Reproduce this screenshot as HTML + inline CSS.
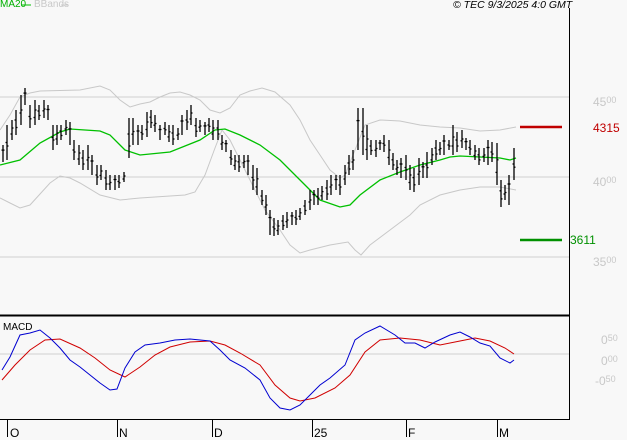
<!DOCTYPE html>
<html><head><meta charset="utf-8"><style>
html,body{margin:0;padding:0;background:#f8f8f8;}
body{width:627px;height:440px;overflow:hidden;position:relative;font-family:"Liberation Sans",sans-serif;}
.t{position:absolute;font-size:12px;white-space:nowrap;line-height:1;}
.g{color:#c8c8c8;}
small{font-size:9px;vertical-align:3px;}
</style></head><body>
<svg width="627" height="440" style="position:absolute;left:0;top:0" id="s">
<line x1="0" y1="97" x2="569" y2="97" stroke="#cfcfcf"/>
<line x1="0" y1="177" x2="569" y2="177" stroke="#cfcfcf"/>
<line x1="0" y1="257" x2="569" y2="257" stroke="#cfcfcf"/>
<line x1="0" y1="354" x2="569" y2="354" stroke="#cfcfcf"/>
<line x1="569.5" y1="8" x2="569.5" y2="420" stroke="#000"/>
<line x1="0" y1="315.5" x2="569" y2="315.5" stroke="#000" stroke-width="2"/>
<line x1="0" y1="419.5" x2="570" y2="419.5" stroke="#000"/>
<g stroke="#000"><line x1="7.5" y1="420" x2="7.5" y2="437"/><line x1="117.5" y1="420" x2="117.5" y2="437"/><line x1="212.5" y1="420" x2="212.5" y2="437"/><line x1="312.5" y1="420" x2="312.5" y2="437"/><line x1="406.5" y1="420" x2="406.5" y2="437"/><line x1="497.5" y1="420" x2="497.5" y2="437"/></g>
<line x1="520" y1="127" x2="562" y2="127" stroke="#c00000" stroke-width="2.5"/>
<line x1="520" y1="240" x2="562" y2="240" stroke="#009000" stroke-width="2.5"/>
<line x1="21" y1="5" x2="31" y2="5" stroke="#00c000"/>
<line x1="61" y1="5" x2="68" y2="5" stroke="#c8c8c8"/>
<polyline fill="none" stroke="#c8c8c8" points="0,130 10,115 20,97 30,93 40,91 80,90 100,86 110,90 120,100 130,107 140,104 150,102 160,97 170,93 180,92 190,95 200,100 210,110 220,113 230,108 240,95 250,91 262,88 275,92 290,105 300,120 310,140 320,155 330,170 340,178 345,175 355,150 365,125 380,120 400,121 420,125 440,127 460,128 480,131 500,130 516,127"/>
<polyline fill="none" stroke="#c8c8c8" points="0,198 10,203 20,208 30,205 50,183 60,176 70,178 80,183 100,195 120,200 140,198 170,196 185,195 195,192 205,175 215,148 222,130 230,140 240,160 250,180 265,210 280,230 290,245 300,253 310,250 330,245 348,242 355,250 361,255 370,245 390,230 410,215 420,205 440,195 460,190 480,187 500,187 516,190"/>
<polyline fill="none" stroke="#00c000" stroke-width="1.3" points="0,165 20,160 40,143 60,132 70,129 100,131 110,135 125,150 140,155 170,152 200,140 215,130 225,129 240,135 260,145 280,160 300,180 320,200 340,207 350,205 360,195 380,180 400,172 420,165 440,160 450,157 460,156 480,157 500,158 510,160 516,158"/>
<g id="bars" stroke="#000" stroke-width="1.3"></g>
<polyline fill="none" stroke="#d00000" points="2,380 15,365 30,350 45,340 60,339 80,348 95,358 110,370 125,377 140,367 155,355 170,347 190,342 210,341 225,345 240,353 260,365 275,385 290,398 300,401 315,398 335,388 350,375 365,352 380,340 400,338 420,340 440,345 460,341 475,338 490,341 505,348 514,354"/>
<polyline fill="none" stroke="#0000d0" points="2,370 10,357 20,335 30,333 40,330 50,338 60,348 70,360 80,367 90,375 100,383 110,390 117,389 125,368 135,352 145,345 160,343 175,340 190,339 210,341 220,350 230,360 245,368 260,380 270,398 280,408 290,410 300,405 310,395 320,385 330,378 345,365 355,340 365,333 380,326 395,335 405,343 415,343 425,348 435,342 450,335 460,332 470,337 480,343 490,346 500,358 510,363 514,360"/>
</svg>
<div class="t" style="left:0;top:0;color:#00b000;font-size:10px">MA20</div>
<div class="t" style="left:34px;top:0;color:#c8c8c8;font-size:10px">BBands</div>
<div class="t" style="left:453px;top:0;font-style:italic;font-size:10.5px">© TEC 9/3/2025 4:0 GMT</div>
<div class="t g" style="left:593px;top:96px">45<small>00</small></div>
<div class="t" style="left:593px;top:122px;color:#c00000">4315</div>
<div class="t g" style="left:593px;top:176px">40<small>00</small></div>
<div class="t" style="left:570px;top:234px;color:#009000">3611</div>
<div class="t g" style="left:593px;top:256px">35<small>00</small></div>
<div class="t g" style="left:601px;top:334px">0<small>50</small></div>
<div class="t g" style="left:601px;top:355px">0<small>00</small></div>
<div class="t g" style="left:595px;top:375px">-0<small>50</small></div>
<div class="t" style="left:3px;top:323px;font-size:10px">MACD</div>
<div class="t" style="left:10px;top:427px">O</div>
<div class="t" style="left:119px;top:427px">N</div>
<div class="t" style="left:214px;top:427px">D</div>
<div class="t" style="left:314px;top:427px">25</div>
<div class="t" style="left:408px;top:427px">F</div>
<div class="t" style="left:499px;top:427px">M</div>
<script>
var b=[[3,145,162],[7,125,160],[12,120,140],[16,110,135],[21,95,125],[25,88,105],[30,105,128],[35,100,125],[39,105,120],[44,100,118],[48,105,120],[53,125,150],[57,125,145],[61,125,140],[66,120,135],[70,122,145],[74,140,160],[79,145,165],[83,150,170],[88,145,170],[92,155,175],[97,165,185],[101,165,180],[106,170,190],[110,175,190],[115,175,190],[119,175,188],[124,172,182],[129,118,158],[133,118,145],[138,125,145],[142,125,140],[147,112,137],[151,110,128],[155,115,132],[160,125,140],[165,122,135],[169,125,142],[173,125,145],[178,128,140],[182,115,135],[187,110,130],[191,105,125],[196,118,137],[200,120,132],[205,122,135],[209,118,132],[213,120,140],[218,120,140],[222,135,150],[226,140,152],[231,150,165],[235,155,170],[239,155,172],[244,155,168],[248,155,175],[253,165,190],[257,168,195],[262,190,205],[266,195,215],[270,210,235],[274,218,236],[278,220,235],[283,215,230],[287,212,228],[292,212,225],[296,210,225],[300,208,220],[305,200,215],[310,190,210],[314,190,205],[318,188,205],[322,186,200],[327,180,200],[331,175,195],[336,175,190],[340,175,195],[345,165,185],[349,155,175],[353,150,170],[358,108,150],[363,108,155],[367,125,160],[371,140,155],[376,140,157],[380,140,150],[384,135,152],[389,140,165],[393,153,170],[397,160,175],[401,158,178],[406,155,180],[410,165,190],[414,168,192],[419,158,185],[423,162,178],[427,152,178],[432,148,165],[436,140,160],[440,142,155],[444,135,155],[449,140,150],[453,125,155],[457,132,152],[462,130,148],[466,138,150],[470,140,155],[475,145,160],[479,148,165],[484,148,162],[488,140,165],[492,142,162],[497,143,185],[501,180,207],[505,185,200],[509,175,205],[514,148,180]];
var g=document.getElementById('bars'),h='';
b.forEach(function(a,i){var o=a[1]+(a[2]-a[1])*(0.3+0.4*((i*7)%5)/4),c=a[1]+(a[2]-a[1])*(0.3+0.4*((i*3)%5)/4);
h+='<line x1="'+a[0]+'" y1="'+a[1]+'" x2="'+a[0]+'" y2="'+a[2]+'"/><line x1="'+(a[0]-1.5)+'" y1="'+o+'" x2="'+a[0]+'" y2="'+o+'"/><line x1="'+a[0]+'" y1="'+c+'" x2="'+(a[0]+1.5)+'" y2="'+c+'"/>';});
g.innerHTML=h;
</script>
</body></html>
